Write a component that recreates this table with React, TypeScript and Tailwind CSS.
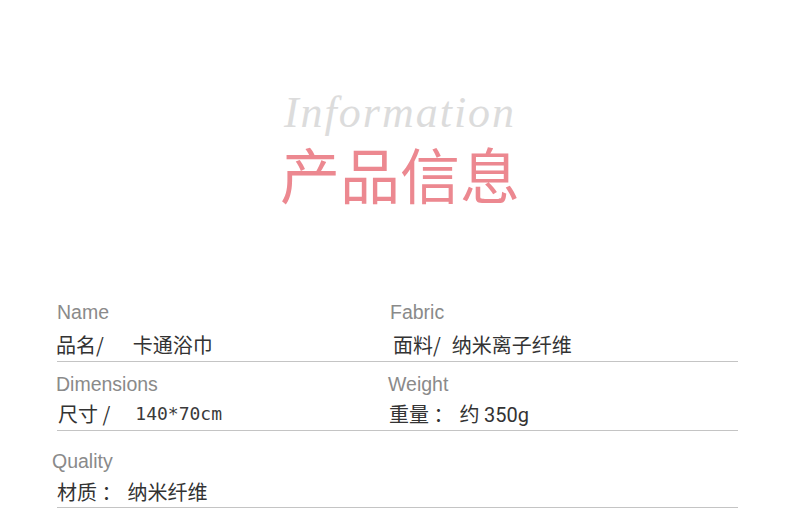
const cjk = "font-['Noto_Sans_CJK_SC',sans-serif]";

function Label({ children, className = "" }: { children: React.ReactNode; className?: string }) {
  return (
    <div className={`h-6 text-[19.5px] leading-6 text-[#8a8a8a] font-['Liberation_Sans','Noto_Sans_CJK_SC',sans-serif] ${className}`}>
      {children}
    </div>
  );
}

function Value({ children, className = "" }: { children: React.ReactNode; className?: string }) {
  return (
    <div className={`flex h-7 items-center whitespace-pre text-[20px] leading-7 text-[#333] ${cjk} ${className}`}>
      {children}
    </div>
  );
}

export default function App() {
  return (
    <div className="flex h-[530px] w-[800px] flex-col bg-white">
      {/* Heading */}
      <div className="flex flex-col items-center pt-[89px]">
        <div className="h-[48px] font-['Liberation_Serif',serif] text-[44px] italic leading-[48px] tracking-[2px] text-[#dcdcdc]">
          Information
        </div>
        <div className={`mt-[3px] h-[66px] text-[60px] leading-[66px] text-[#ec8890] ${cjk}`}>
          产品信息
        </div>
      </div>

      {/* Spec table */}
      <div className="ml-[57px] mt-[94px] w-[681px]">
        <div className="grid grid-cols-[331px_1fr] border-b border-[#c4c4c4] pb-[2px]">
          <div>
            <Label>Name</Label>
            <Value className="mt-[7px] -ml-[1px]">
              品名/<span className="ml-[29px]">卡通浴巾</span>
            </Value>
          </div>
          <div>
            <Label className="ml-[2px]">Fabric</Label>
            <Value className="mt-[7px] ml-[5px]">
              面料/<span className="ml-[11px]">纳米离子纤维</span>
            </Value>
          </div>
        </div>

        <div className="mt-[10px] grid grid-cols-[331px_1fr] border-b border-[#c4c4c4] pb-[2px]">
          <div>
            <Label className="-ml-[1px]">Dimensions</Label>
            <Value className="mt-1 ml-[1px]">
              尺寸 /<span className="ml-[25px] font-['DejaVu_Sans_Mono',monospace] text-[18px] text-[#3a3a3a]">140*70cm</span>
            </Value>
          </div>
          <div>
            <Label>Weight</Label>
            <Value className="mt-1 ml-[1px]">
              重量 ：<span className="ml-[6px]">约 <span className="font-['Roboto',sans-serif]">350g</span></span>
            </Value>
          </div>
        </div>

        <div className="mt-[18px] border-b border-[#c4c4c4] pb-[1px]">
          <Label className="-ml-[5px]">Quality</Label>
          <Value className="mt-[5px]">
            材质 ：<span className="ml-[6px]">纳米纤维</span>
          </Value>
        </div>
      </div>
    </div>
  );
}
